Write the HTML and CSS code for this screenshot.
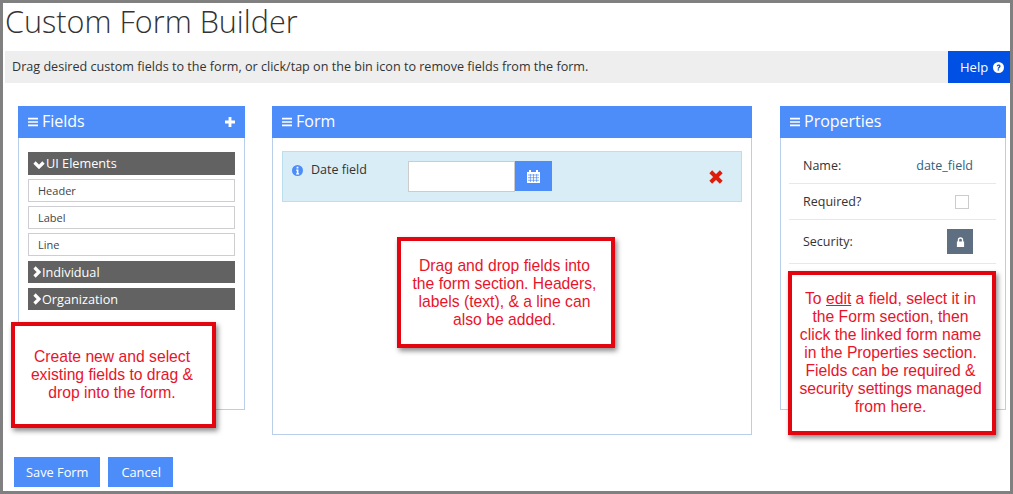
FILE: index.html
```html
<!DOCTYPE html>
<html lang="en">
<head>
    <meta charset="UTF-8">
    <meta name="viewport" content="width=device-width, initial-scale=1.0">
    <title>Custom Form Builder</title>
    <link rel="stylesheet" href="styles.css">
</head>
<body>
    <div class="frame">
        <h1 class="page-title">Custom Form Builder</h1>

        <div class="info-bar">
            <span class="info-text">Drag desired custom fields to the form, or click/tap on the bin icon to remove fields from the form.</span>
            <a class="help-btn" href="#">Help
                <svg class="help-icon" viewBox="0 0 24 24"><circle cx="12" cy="12" r="12" fill="#fff"/><path d="M8 9.3C8.3 6.8 10 5.4 12.3 5.4c2.4 0 4.2 1.500 4.200 3.700 0 3.300-3.300 3-3.300 5.500h-3c0-3.800 3.200-3.700 3.200-5.400 0-.8-.5-1.200-1.200-1.200-.8 0-1.300.5-1.400 1.500zM10.200 15.800h3v3h-3z" fill="#0050e4"/></svg>
            </a>
        </div>

        <div class="panels">
            <!-- Fields -->
            <div class="panel panel-fields">
                <div class="panel-head">
                    <svg class="bars" viewBox="0 0 12 10"><path d="M0 0h12v2H0zM0 4h12v2H0zM0 8h12v2H0z" fill="#fff"/></svg>
                    <span>Fields</span>
                    <svg class="plus" viewBox="0 0 12 12"><path d="M4.300 0h3.400v4.300H12v3.400H7.700V12H4.300V7.700H0V4.300h4.300z" fill="#fff"/></svg>
                </div>
                <div class="panel-body fields-body">
                    <div class="group group-open">
                        <svg class="chev-down" viewBox="0 0 12 8"><path d="M1.500 1.500L6 6l4.500-4.500" fill="none" stroke="#fff" stroke-width="3.200"/></svg>
                        <span>UI Elements</span>
                    </div>
                    <div class="item">Header</div>
                    <div class="item">Label</div>
                    <div class="item">Line</div>
                    <div class="group">
                        <svg class="chev-right" viewBox="0 0 8 12"><path d="M1.500 1.500L6 6l-4.500 4.500" fill="none" stroke="#fff" stroke-width="3.200"/></svg>
                        <span>Individual</span>
                    </div>
                    <div class="group">
                        <svg class="chev-right" viewBox="0 0 8 12"><path d="M1.500 1.500L6 6l-4.500 4.500" fill="none" stroke="#fff" stroke-width="3.200"/></svg>
                        <span>Organization</span>
                    </div>
                </div>
            </div>

            <!-- Form -->
            <div class="panel panel-form">
                <div class="panel-head">
                    <svg class="bars" viewBox="0 0 12 10"><path d="M0 0h12v2H0zM0 4h12v2H0zM0 8h12v2H0z" fill="#fff"/></svg>
                    <span>Form</span>
                </div>
                <div class="panel-body form-body">
                    <div class="field-row">
                        <svg class="info-icon" viewBox="0 0 24 24"><circle cx="12" cy="12" r="12" fill="#4d8dfa"/><path d="M10 4h4v3.500h-4zM9 10h5v8h1.500v2.500h-6.500V18h1.500v-5.500H9z" fill="#fff"/></svg>
                        <span class="field-label">Date field</span>
                        <div class="date-input"></div>
                        <div class="date-btn">
                            <svg class="cal-icon" viewBox="0 0 13 14"><path d="M0 3h2V1h2v2h5V1h2v2h2v11H0z" fill="#fff"/><path d="M1 6h11M1 8.700h11M1 11.300h11M3.400 5v8M6.500 5v8M9.600 5v8" stroke="#4d8dfa" stroke-width=".7" fill="none"/></svg>
                        </div>
                        <svg class="remove-icon" viewBox="0 0 12 12"><path d="M1.500 1.500l9 9M10.500 1.500l-9 9" stroke="#dd1c0c" stroke-width="3.400" fill="none"/></svg>
                    </div>
                </div>
            </div>

            <!-- Properties -->
            <div class="panel panel-props">
                <div class="panel-head">
                    <svg class="bars" viewBox="0 0 12 10"><path d="M0 0h12v2H0zM0 4h12v2H0zM0 8h12v2H0z" fill="#fff"/></svg>
                    <span>Properties</span>
                </div>
                <div class="panel-body props-body">
                    <div class="prop-row prop-name">
                        <span>Name:</span>
                        <a class="prop-link" href="#">date_field</a>
                    </div>
                    <div class="prop-row prop-req">
                        <span>Required?</span>
                        <span class="checkbox"></span>
                    </div>
                    <div class="prop-row prop-sec">
                        <span>Security:</span>
                        <span class="lock-btn">
                            <svg class="lock-icon" viewBox="0 0 10 11"><path d="M2 5V3.300a3 3 0 0 1 6 0V5h1v6H1V5zM3.500 5h3V3.300a1.500 1.500 0 0 0-3 0z" fill="#fff"/></svg>
                        </span>
                    </div>
                </div>
            </div>
        </div>

        <div class="actions">
            <a class="btn" href="#">Save Form</a>
            <a class="btn" href="#">Cancel</a>
        </div>

        <!-- annotation callouts -->
        <div class="callout callout-fields">Create new and select existing fields to drag &amp; drop into the form.</div>
        <div class="callout callout-form">Drag and drop fields into the form section. Headers, labels (text), &amp; a line can also be added.</div>
        <div class="callout callout-props">To <u>edit</u> a field, select it in<br>the Form section, then click the linked form name in the Properties section. Fields can be required &amp; security settings managed from here.</div>
    </div>
</body>
</html>
```

FILE: styles.css
```css
html, body {
    margin: 0;
    height: 100%;
    overflow: hidden;
}

body {
    background-color: #fff;
    color: #333;
    font-family: "Open Sans", sans-serif;
}

.frame {
    position: relative;
    box-sizing: border-box;
    width: 1013px;
    height: 494px;
    border: 3px solid #808080;
}

.page-title {
    margin: 0;
    height: 48px;
    padding-left: 2px;
    font-size: 30.600px;
    line-height: 37px;
    font-weight: 300;
    color: #333;
}

.info-bar {
    display: flex;
    justify-content: space-between;
    align-items: stretch;
    height: 32px;
    margin-left: 2px;
    background-color: #eee;
}

.info-text {
    padding-left: 7px;
    font-size: 12.600px;
    line-height: 31px;
}

.help-btn {
    display: flex;
    align-items: center;
    gap: 5px;
    box-sizing: border-box;
    width: 62px;
    padding-left: 12px;
    background-color: #0050e4;
    color: #fff;
    font-size: 13px;
    text-decoration: none;
}

.help-icon {
    width: 11px;
    height: 11px;
}

.panels {
    display: flex;
    align-items: flex-start;
    margin-top: 23px;
    padding-left: 15px;
}

.panel {
    box-sizing: border-box;
    border: 1px solid #b9cfe9;
    border-top: 0;
}

.panel-fields {
    width: 227px;
    height: 304px;
}

.panel-form {
    width: 480px;
    height: 329px;
    margin-left: 27px;
}

.panel-props {
    width: 226px;
    height: 304px;
    margin-left: 28px;
}

.panel-head {
    display: flex;
    align-items: center;
    gap: 4px;
    box-sizing: border-box;
    height: 32px;
    margin: 0 -1px;
    padding: 0 10px 2px 10px;
    background-color: #4d8dfa;
    color: #fff;
    font-size: 16px;
}

.bars {
    width: 10px;
    height: 10px;
    margin-top: 2px;
}

.plus {
    width: 10px;
    height: 10px;
    margin-left: auto;
    margin-top: 2px;
}

.fields-body {
    padding: 14px 9px 0;
}

.group {
    display: flex;
    align-items: center;
    gap: 1px;
    box-sizing: border-box;
    height: 22px;
    margin-top: 5px;
    padding: 0 0 1px 5px;
    background-color: #626262;
    color: #fff;
    font-size: 12.700px;
}

.group-open {
    height: 23px;
    margin-top: 0;
}

.chev-down {
    width: 12px;
    height: 8px;
    margin-top: 3px;
}

.chev-right {
    width: 8px;
    height: 12px;
    margin-top: 1px;
}

.item {
    box-sizing: border-box;
    height: 23px;
    margin-top: 4px;
    padding-left: 9px;
    border: 1px solid #cdcdd2;
    font-size: 11px;
    line-height: 21px;
    color: #444;
}

.form-body {
    padding: 13px 9px 0;
}

.field-row {
    display: flex;
    align-items: flex-start;
    box-sizing: border-box;
    height: 51px;
    padding: 9px 18px 0 9px;
    background-color: #d9edf7;
    border: 1px solid #bcdff0;
}

.info-icon {
    width: 11px;
    height: 11px;
    margin-top: 4px;
}

.field-label {
    width: 97px;
    margin-left: 8px;
    font-size: 12.500px;
    line-height: 18px;
}

.date-input {
    box-sizing: border-box;
    width: 107px;
    height: 31px;
    background-color: #fff;
    border: 1px solid #ccc;
}

.date-btn {
    display: flex;
    align-items: center;
    justify-content: center;
    width: 37px;
    height: 30px;
    background-color: #4d8dfa;
}

.cal-icon {
    width: 13px;
    height: 14px;
}

.remove-icon {
    width: 14px;
    height: 14px;
    margin-top: 9px;
    margin-left: auto;
}

.props-body {
    padding: 10px 9px 0 8px;
}

.prop-row {
    display: flex;
    align-items: center;
    justify-content: space-between;
    padding: 0 23px 0 14px;
    border-bottom: 1px solid #e4e9ee;
    font-size: 12.500px;
}

.prop-name {
    height: 35px;
}

.prop-req {
    height: 35px;
}

.prop-sec {
    height: 43px;
}

.prop-link {
    color: #2d6280;
    text-decoration: none;
}

.checkbox {
    box-sizing: border-box;
    width: 14px;
    height: 14px;
    margin-right: 4px;
    border: 1px solid #ccc;
}

.lock-btn {
    display: flex;
    align-items: center;
    justify-content: center;
    width: 26px;
    height: 25px;
    background-color: #5f6f82;
}

.lock-icon {
    width: 9px;
    height: 10px;
}

.actions {
    display: flex;
    gap: 8px;
    position: absolute;
    left: 11px;
    bottom: 4px;
}

.btn {
    padding: 0 12px;
    height: 30px;
    background-color: #4d8dfa;
    color: #fff;
    font-size: 12.800px;
    line-height: 30px;
    text-decoration: none;
}

.btn + .btn {
    padding-left: 13px;
}

/* red annotation boxes drawn on top of the page */
.callout {
    position: absolute;
    display: flex;
    align-items: center;
    justify-content: center;
    box-sizing: border-box;
    padding: 0 14px 0 11px;
    background-color: #fff;
    border: 4px solid #e30611;
    box-shadow: 2px 3px 5px rgba(0, 0, 0, 0.45);
    color: #e8142a;
    font-family: "Liberation Sans", Arial, sans-serif;
    font-size: 15.700px;
    line-height: 18px;
    text-align: center;
}

.callout-fields {
    left: 8px;
    top: 319px;
    width: 205px;
    height: 106px;
}

.callout-form {
    left: 394px;
    top: 234px;
    width: 218px;
    height: 111px;
    padding: 0 10px 0 7px;
}

.callout-props {
    display: block;
    left: 785px;
    top: 268px;
    width: 208px;
    height: 164px;
    padding: 15px 8px 0 5px;
}
```
